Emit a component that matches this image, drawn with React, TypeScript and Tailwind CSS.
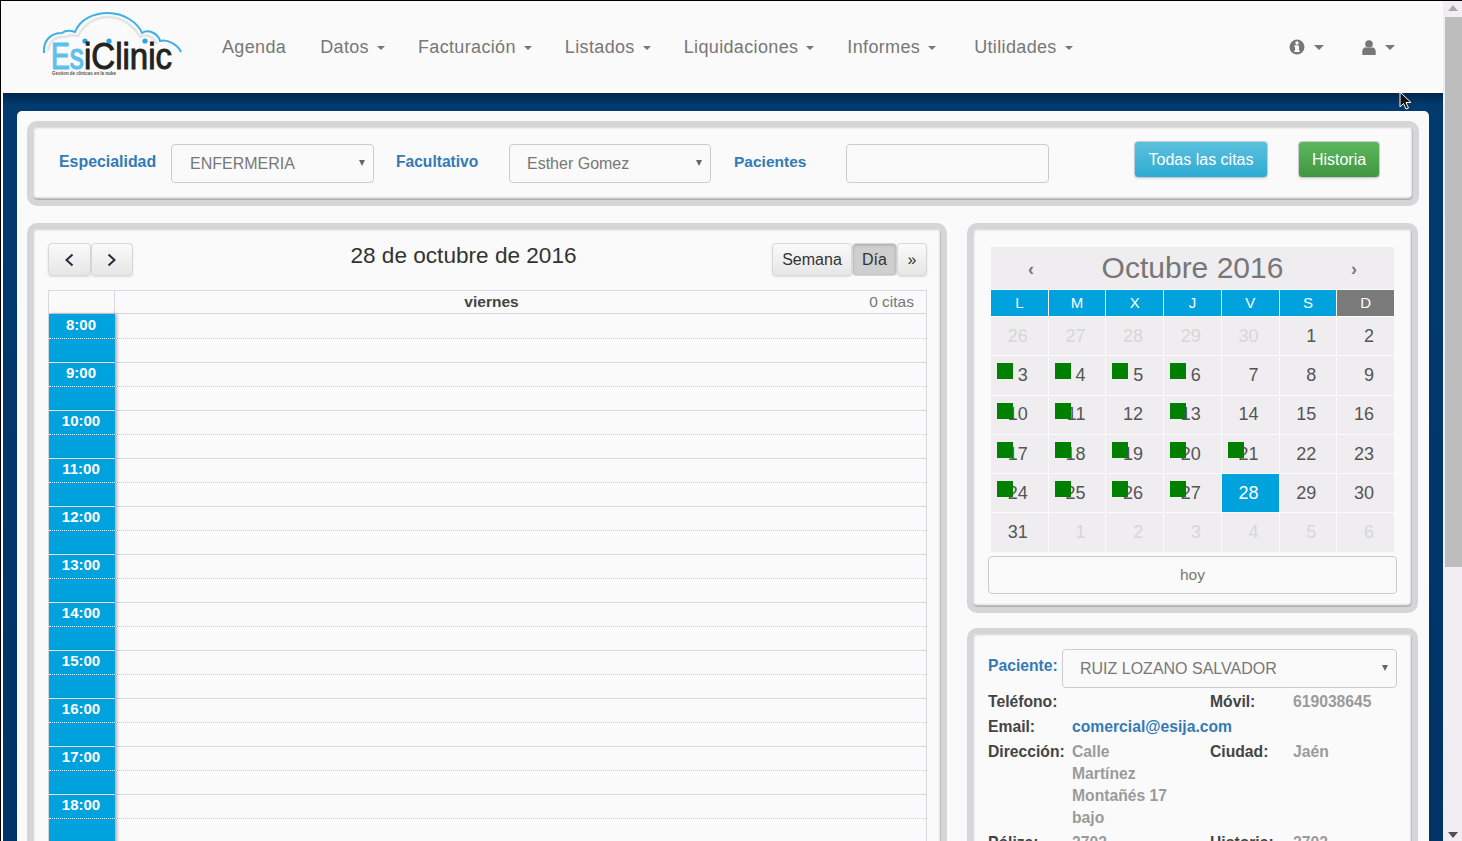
import React from "react";

const F = "font-['Liberation_Sans',Arial,sans-serif]";

function Caret({ className = "" }: { className?: string }) {
  return <span className={"inline-block w-0 h-0 border-x-[4px] border-x-transparent border-t-[4px] border-t-[#777] " + className} />;
}

function Logo() {
  return (
    <svg width="142" height="68" viewBox="0 0 142 68" className="shrink-0 -mt-[4px]">
      <path d="M2 42 C1 30 8 22 20 22 C24 19 30 20 33 21 C38 8 52 2 66 2 C82 2 96 12 100 22 C106 18 116 22 118 30 C126 28 136 34 139 41" fill="none" stroke="#3fb0e4" strokeWidth="2" />
      <path d="M6 40 C7 30 14 25 24 26 C28 23 32 24 36 25 C42 13 54 6 66 6 C80 6 92 15 98 26 C106 22 112 27 115 33" fill="none" stroke="#e4e4e6" strokeWidth="2.5" />
      <circle cx="67" cy="30" r="2.6" fill="#2aa6e0" />
      <circle cx="103" cy="30" r="2.6" fill="#2aa6e0" />
      <circle cx="43" cy="30" r="2.6" fill="#2aa6e0" />
      <text x="9" y="58" fontFamily="'Liberation Sans',Arial,sans-serif" fontSize="37" fontWeight="400" fill="#5dc0ec" stroke="#5dc0ec" strokeWidth="1.2" textLength="33" lengthAdjust="spacingAndGlyphs">Es</text>
      <text x="42" y="58" fontFamily="'Liberation Sans',Arial,sans-serif" fontSize="37" fontWeight="400" fill="#222" stroke="#222" strokeWidth="1" textLength="88" lengthAdjust="spacingAndGlyphs">iClinic</text>
      <text x="10" y="64" fontFamily="'Liberation Sans',Arial,sans-serif" fontSize="5" fontWeight="700" fill="#555" textLength="64" lengthAdjust="spacingAndGlyphs">Gestion de clinicas en la nube</text>
    </svg>
  );
}

function NavItem({ label, caret = true, ml }: { label: string; caret?: boolean; ml: string }) {
  return (
    <div className={"flex items-center text-[18px] tracking-[0.35px] text-[#777] " + ml}>
      {label}
      {caret && <Caret className="ml-[8px] mt-[2px]" />}
    </div>
  );
}

function Card({ className = "", children }: { className?: string; children: React.ReactNode }) {
  return (
    <div className={"rounded-[10px] border-[6px] border-[#d6d6d8] bg-[#fafafa] shadow-[inset_1px_1px_2px_rgba(0,0,0,0.15),inset_-1px_-2px_2px_rgba(0,0,0,0.3)] " + className}>
      {children}
    </div>
  );
}

function FakeSelect({ text, className = "", pad = "pl-[18px]" }: { text: string; className?: string; pad?: string }) {
  return (
    <div className={"relative flex items-center h-[39px] rounded-[4px] border border-[#ccc] bg-[#fafafa] text-[16px] text-[#777] " + pad + " " + className}>
      <span className="mt-[1px]">{text}</span>
      <span className="absolute right-[8px] top-[15px] w-0 h-0 border-x-[3px] border-x-transparent border-t-[6px] border-t-[#666]" />
    </div>
  );
}

function Btn({ className = "", children }: { className?: string; children: React.ReactNode }) {
  return (
    <div className={"flex items-center justify-center h-[33px] rounded-[4px] border border-[#d8d8d8] bg-gradient-to-b from-[#fafafa] to-[#e6e6e6] shadow-[0_1px_2px_rgba(0,0,0,0.12)] text-[16px] text-[#333] " + className}>
      {children}
    </div>
  );
}

const hours = ["8:00", "9:00", "10:00", "11:00", "12:00", "13:00", "14:00", "15:00", "16:00", "17:00", "18:00", ""];

function TimeRow({ h, first }: { h: string; first: boolean }) {
  const half = first ? "h-[25px] leading-[21px]" : "h-[24px] leading-[19px]";
  return (
    <div className="flex shrink-0">
      <div className="w-[66px] shrink-0 bg-[#00a2de] text-white font-bold text-[15px] shadow-[2px_0_3px_rgba(0,0,0,0.3)] z-10">
        <div className={half + " border-b border-dotted border-white text-center pr-[2px]"}>{h}</div>
        <div className="h-[24px] border-b border-white" />
      </div>
      <div className="flex-1">
        <div className={half + " border-b border-dotted border-[#ccc]"} />
        <div className="h-[24px] border-b border-[#d8d8de]" />
      </div>
    </div>
  );
}

type Day = { n: number; muted?: boolean; mark?: boolean; today?: boolean };
const weeks: Day[][] = [
  [26, 27, 28, 29, 30].map((n) => ({ n, muted: true } as Day)).concat([{ n: 1 }, { n: 2 }]),
  [3, 4, 5, 6].map((n) => ({ n, mark: true } as Day)).concat([{ n: 7 }, { n: 8 }, { n: 9 }]),
  [{ n: 10, mark: true }, { n: 11, mark: true }, { n: 12 }, { n: 13, mark: true }, { n: 14 }, { n: 15 }, { n: 16 }],
  [17, 18, 19, 20, 21].map((n) => ({ n, mark: true } as Day)).concat([{ n: 22 }, { n: 23 }]),
  [24, 25, 26, 27].map((n) => ({ n, mark: true } as Day)).concat([{ n: 28, today: true }, { n: 29 }, { n: 30 }]),
  [{ n: 31 } as Day].concat([1, 2, 3, 4, 5, 6].map((n) => ({ n, muted: true } as Day))),
];

function MiniCalendar() {
  return (
    <div className="ml-[18px] w-[403px]">
      <div className="flex items-center justify-between h-[42px] bg-[#efedf0] px-[37px] text-[#777]">
        <span className="text-[18px] font-bold mt-[3px]">‹</span>
        <span className="text-[30px] -mt-[1px]">Octubre 2016</span>
        <span className="text-[18px] font-bold mt-[3px]">›</span>
      </div>
      <div className="grid grid-cols-7 gap-x-[1px] mt-[1px] text-white text-[15px]">
        {["L", "M", "X", "J", "V", "S", "D"].map((d) => (
          <div key={d} className={"h-[26px] flex items-center justify-center " + (d === "D" ? "bg-[#7a7a7a]" : "bg-[#00a2de]")}>{d}</div>
        ))}
      </div>
      <div className="grid grid-cols-7 gap-[1px] mt-[1px] auto-rows-[38.3px]">
        {weeks.flat().map((d, i) => (
          <div key={i} className={"relative flex items-center justify-end pr-[20px] text-[18px] " + (d.today ? "bg-[#00a2de] text-white" : d.muted ? "bg-[#efedf0] text-[#d5d8d5]" : "bg-[#efedf0] text-[#555]")}>
            {d.n}
            {d.mark && <span className="absolute left-[6px] top-[7px] w-[16px] h-[16px] bg-[#008000]" />}
          </div>
        ))}
      </div>
    </div>
  );
}

function InfoLabel({ children, className = "" }: { children: React.ReactNode; className?: string }) {
  return <div className={"font-bold text-[#444] " + className}>{children}</div>;
}

function Arrow({ dir }: { dir: "left" | "right" }) {
  return (
    <svg width="11" height="14" viewBox="0 0 11 14">
      <path d={dir === "left" ? "M8.5 1.5 L2.5 7 L8.5 12.5" : "M1.5 1.5 L7.5 7 L1.5 12.5"} fill="none" stroke="#222b3c" strokeWidth="2" />
    </svg>
  );
}

export default function App() {
  return (
    <div className={"relative flex w-[1462px] h-[841px] overflow-hidden border-t border-black bg-[#fafafa] " + F}>
      <div className="w-[1443px] shrink-0 flex flex-col border-l border-black">
        <nav className="flex items-center h-[92px] shrink-0 pl-[41px]">
          <Logo />
          <NavItem label="Agenda" caret={false} ml="ml-[38px]" />
          <NavItem label="Datos" ml="ml-[34px]" />
          <NavItem label="Facturación" ml="ml-[33px]" />
          <NavItem label="Listados" ml="ml-[33px]" />
          <NavItem label="Liquidaciones" ml="ml-[33px]" />
          <NavItem label="Informes" ml="ml-[33px]" />
          <NavItem label="Utilidades" ml="ml-[38px]" />
          <div className="ml-auto flex items-center gap-[9px] text-[#777]">
            <svg width="16" height="16" viewBox="0 0 16 16">
              <circle cx="8" cy="8" r="7.5" fill="#777" />
              <rect x="6" y="6.5" width="4" height="6.5" fill="#fafafa" />
              <rect x="5.2" y="6.5" width="3" height="1.3" fill="#fafafa" />
              <rect x="5.2" y="11.7" width="5.6" height="1.3" fill="#fafafa" />
              <circle cx="8" cy="4" r="1.7" fill="#fafafa" />
            </svg>
            <Caret className="border-x-[5px] border-t-[5px]" />
          </div>
          <div className="ml-[38px] mr-[48px] flex items-center gap-[9px]">
            <svg width="14" height="15" viewBox="0 0 14 15">
              <circle cx="7" cy="4" r="3.8" fill="#777" />
              <path d="M0.3 15 V11 C0.3 8.5 2.5 7.5 4 7.2 C5.5 8.4 8.5 8.4 10 7.2 C11.5 7.5 13.7 8.5 13.7 11 V15 Z" fill="#777" />
            </svg>
            <Caret className="border-x-[5px] border-t-[5px]" />
          </div>
        </nav>
        <main className="flex-1 ml-[2px] min-h-0 overflow-hidden pt-[18px] px-[14px] bg-gradient-to-b from-[#02254b] from-0% via-[#003b70] via-[12px] to-[#003366]">
          <div className="h-[800px] rounded-t-[5px] bg-[#fafafa] px-[10px] pt-[10px]">
            <Card className="h-[85px] flex items-start pl-[26px]">
              <div className="w-[112px] font-bold text-[#337ab7] text-[15.9px] mt-[23px]">Especialidad</div>
              <FakeSelect text="ENFERMERIA" className="w-[203px] mt-[17px]" />
              <div className="ml-[22px] w-[113px] font-bold text-[#337ab7] text-[15.6px] mt-[23px]">Facultativo</div>
              <FakeSelect text="Esther Gomez" className="w-[202px] mt-[17px]" pad="pl-[17px]" />
              <div className="ml-[23px] w-[112px] font-bold text-[#337ab7] text-[15.5px] mt-[23px]">Pacientes</div>
              <div className="w-[203px] h-[39px] mt-[17px] rounded-[4px] border border-[#ccc]" />
              <div className="ml-[85px] mt-[14px] w-[134px] h-[37px] flex items-center justify-center rounded-[4px] border border-[#c9c9d0] bg-gradient-to-b from-[#5bc0de] to-[#2aabd2] text-white text-[16px] shadow-[0_1px_2px_rgba(0,0,0,0.1)]">Todas las citas</div>
              <div className="ml-[30px] mt-[14px] w-[82px] h-[37px] flex items-center justify-center rounded-[4px] border border-[#c9c9d0] bg-gradient-to-b from-[#5cb85c] to-[#419641] text-white text-[16px] shadow-[0_1px_2px_rgba(0,0,0,0.1)]">Historia</div>
            </Card>
            <div className="flex gap-[20px] mt-[17px] items-start">
              <Card className="w-[920px] h-[640px] pl-[15px] pr-[14px] pt-[14px] overflow-hidden">
                <div className="flex items-start justify-between h-[47px]">
                  <div className="flex">
                    <Btn className="w-[43px]"><Arrow dir="left" /></Btn>
                    <Btn className="w-[42px]"><Arrow dir="right" /></Btn>
                  </div>
                  <div className="text-[22.6px] text-[#333] -mt-[4px] ml-[22px]">28 de octubre de 2016</div>
                  <div className="flex">
                    <Btn className="w-[80px]">Semana</Btn>
                    <Btn className="w-[45px] bg-none bg-[#cfcfcf] border-[#c4c4c4] shadow-[inset_0_1px_3px_rgba(0,0,0,0.2)]">Día</Btn>
                    <Btn className="w-[30px]">»</Btn>
                  </div>
                </div>
                <div className="w-[879px] border-x border-t border-[#d8d8de]">
                  <div className="flex h-[23px] border-b border-[#d8d8de]">
                    <div className="w-[66px] border-r border-[#d8d8de] shrink-0" />
                    <div className="relative flex-1 flex items-center justify-center text-[15.5px] font-bold text-[#444] pr-[58px]">
                      viernes
                      <span className="absolute right-[12px] font-normal text-[#777]">0 citas</span>
                    </div>
                  </div>
                  <div className="flex flex-col">
                    {hours.map((h, i) => <TimeRow key={i} h={h} first={i === 0} />)}
                  </div>
                </div>
              </Card>
              <div className="w-[451px] shrink-0 flex flex-col gap-[15px]">
                <Card className="h-[390px] pt-[18px]">
                  <MiniCalendar />
                  <div className="ml-[15px] mt-[4px] w-[409px] h-[38px] flex items-center justify-center rounded-[4px] border border-[#ccc] text-[15.5px] text-[#777]">hoy</div>
                </Card>
                <Card className="h-[300px] pl-[15px] pr-[9px] pt-[15px] text-[15.7px]">
                  <div className="flex items-start">
                    <div className="w-[74px] font-bold text-[#337ab7] mt-[5px]">Paciente:</div>
                    <FakeSelect text="RUIZ LOZANO SALVADOR" className="w-[335px] h-[38px]" pad="pl-[17px]" />
                  </div>
                  <div className="grid grid-cols-[84px_138px_83px_1fr] mt-[3px] leading-[22px] font-bold">
                    <InfoLabel className="h-[25px]">Teléfono:</InfoLabel>
                    <div />
                    <InfoLabel>Móvil:</InfoLabel>
                    <div className="text-[#9a9a9a]">619038645</div>
                    <InfoLabel className="h-[25px]">Email:</InfoLabel>
                    <div className="col-span-3 text-[#337ab7]">comercial@esija.com</div>
                    <InfoLabel className="mb-[3px]">Dirección:</InfoLabel>
                    <div className="text-[#9a9a9a] mb-[3px] pr-[38px]">Calle Martínez Montañés 17 bajo</div>
                    <InfoLabel>Ciudad:</InfoLabel>
                    <div className="text-[#9a9a9a]">Jaén</div>
                    <InfoLabel>Póliza:</InfoLabel>
                    <div className="text-[#9a9a9a]">2702</div>
                    <InfoLabel>Historia:</InfoLabel>
                    <div className="text-[#9a9a9a]">2702</div>
                  </div>
                </Card>
              </div>
            </div>
          </div>
        </main>
      </div>
      <div className="relative w-[19px] shrink-0 bg-[#f1edf3] flex flex-col items-center">
        <span className="mt-[4px] w-0 h-0 border-x-[5px] border-x-transparent border-b-[6px] border-b-[#a8a8a8]" />
        <div className="mt-[6px] ml-[1px] w-[17px] h-[550px] bg-[#bdbdbd]" />
        <span className="absolute bottom-[3px] w-0 h-0 border-x-[5px] border-x-transparent border-t-[6px] border-t-[#505050]" />
      </div>
      <svg width="14" height="20" viewBox="0 0 14 20" className="absolute left-[1399px] top-[90px]">
        <path d="M1 1 V16 L4.5 12.5 L7 18 L9.5 17 L7 11.5 L12 11.5 Z" fill="#111" stroke="#fff" strokeWidth="1" />
      </svg>
    </div>
  );
}
